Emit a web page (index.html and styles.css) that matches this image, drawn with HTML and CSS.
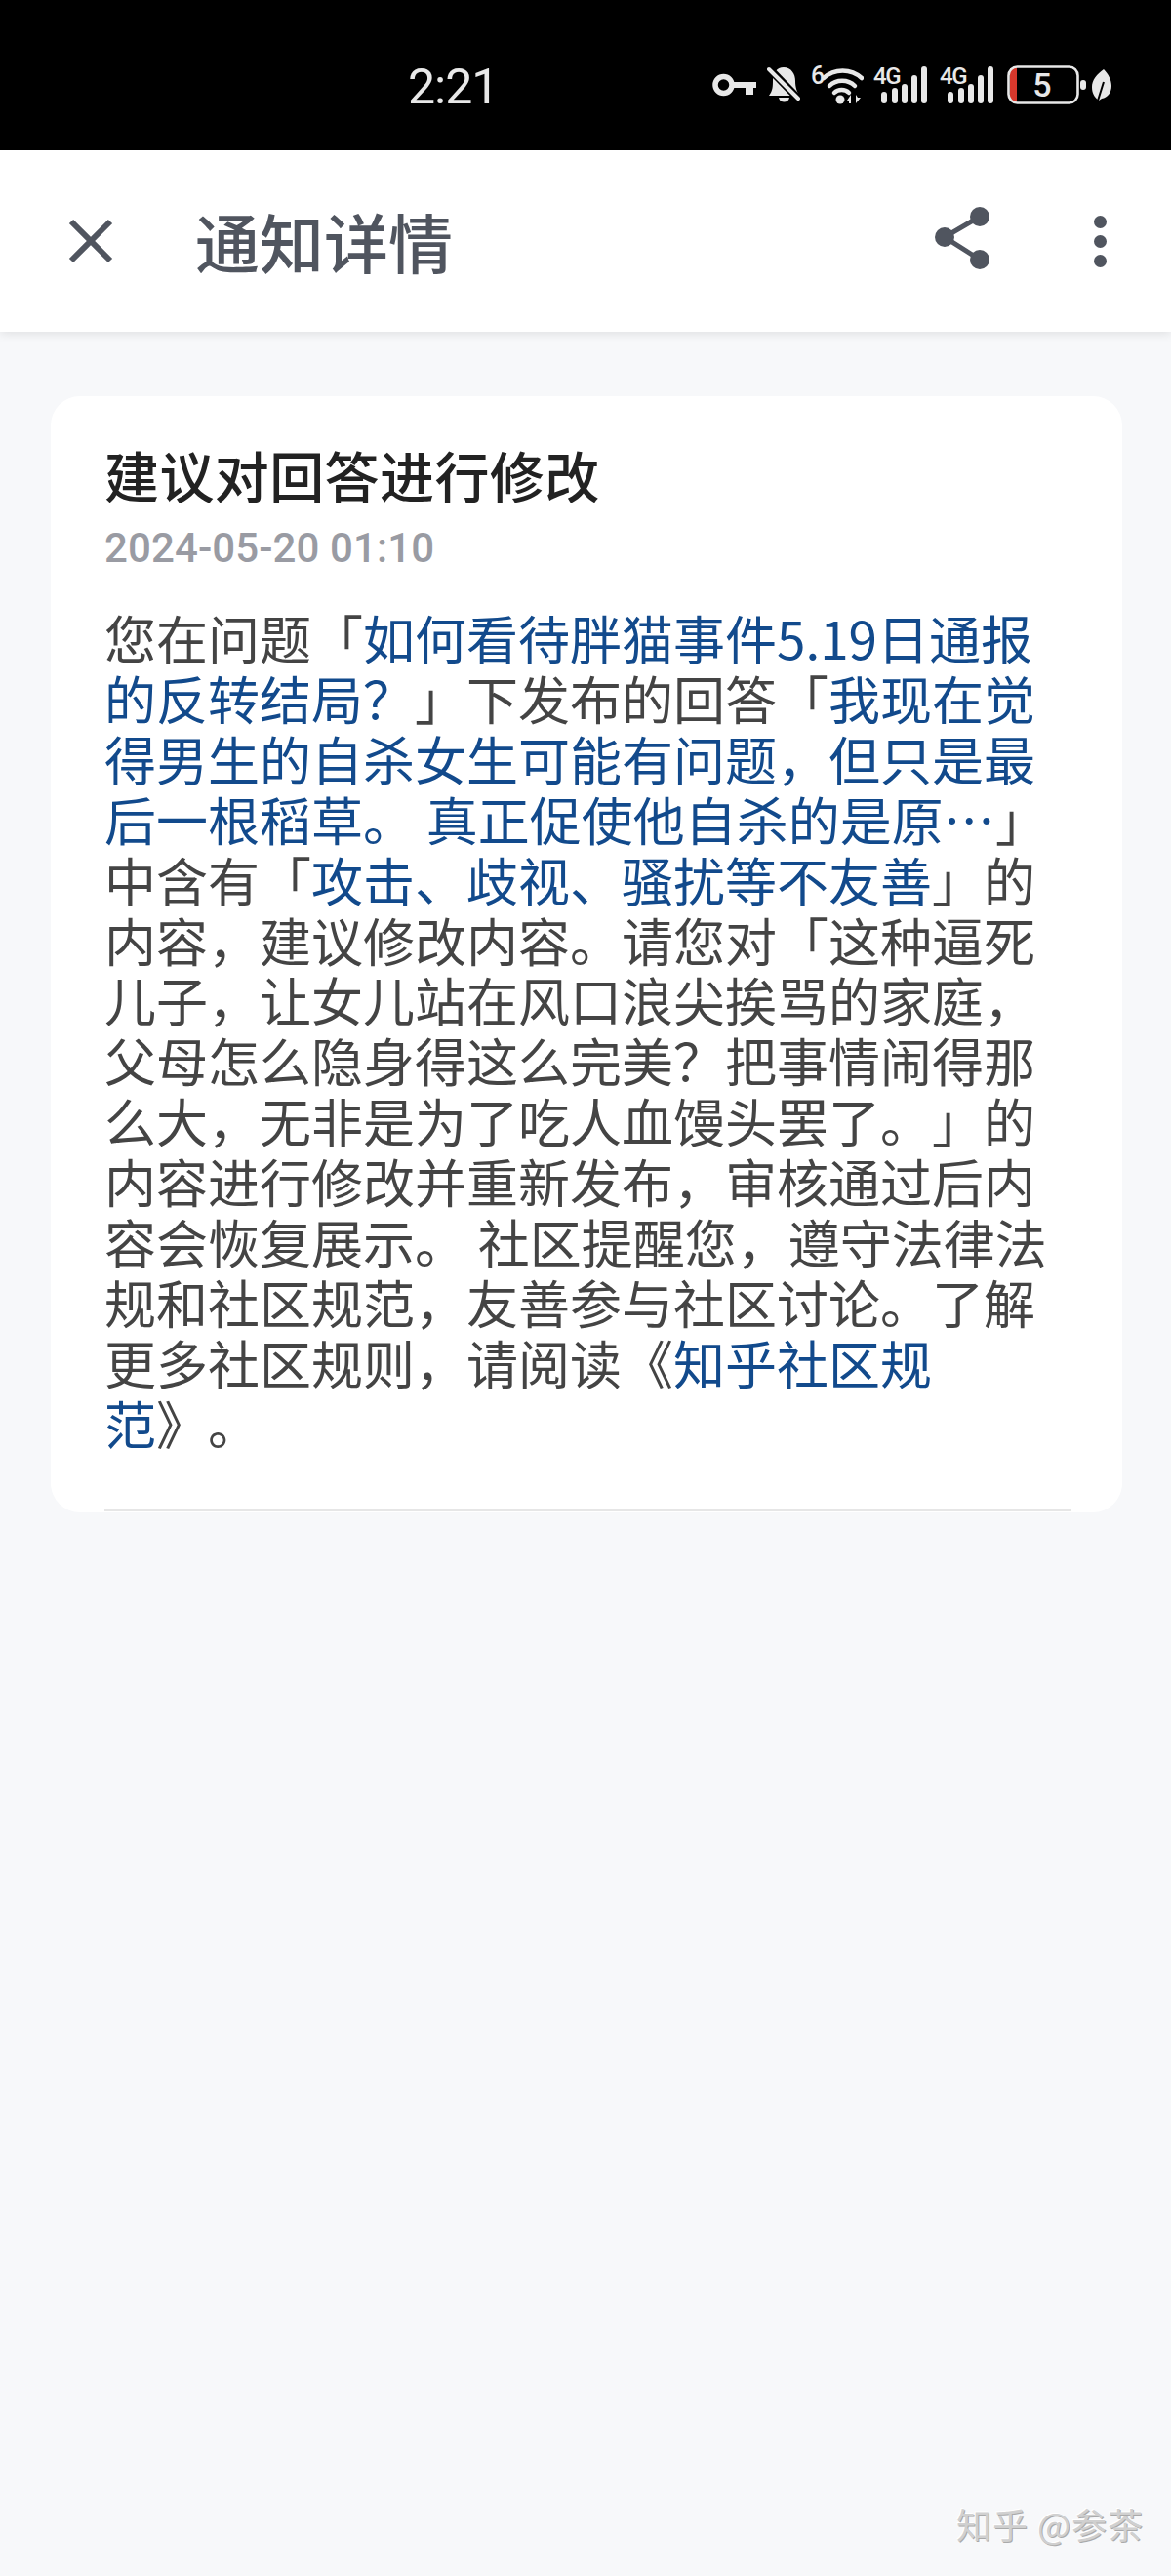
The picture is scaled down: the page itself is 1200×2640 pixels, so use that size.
FILE: index.html
```html
<!DOCTYPE html>
<html lang="zh-CN">
<head>
    <meta charset="UTF-8">
    <meta name="viewport" content="width=device-width, initial-scale=1.0">
    <title>通知详情</title>
    <link rel="stylesheet" href="styles.css">
</head>
<body>
    <div class="status-bar">
        <span class="status-time">2:21</span>
        <div class="status-icons">
            <svg class="icon-key" width="45" height="24" viewBox="0 0 45 24">
                <circle cx="11.5" cy="12" r="8.5" fill="none" stroke="#e8e8e8" stroke-width="5.5"/>
                <path d="M19 9h26v6h-3v7h-8v-7h-15z" fill="#e8e8e8"/>
            </svg>
            <svg class="icon-bell" width="35" height="38" viewBox="0 0 35 38">
                <path d="M17 1C25 1 29 8 29 15C29 22 31 26 33 30H2C6 25 6 20 6 14C6 7 10 1 17 1z" fill="#e8e8e8"/>
                <path d="M12 32h11c-1 6-10 6-11 0z" fill="#e8e8e8"/>
                <path d="M0 0l34 35" stroke="#000" stroke-width="8"/>
                <path d="M2 3l30 30" stroke="#e8e8e8" stroke-width="4" stroke-linecap="round"/>
            </svg>
            <svg class="icon-wifi" width="54" height="48" viewBox="0 -4 54 48">
                <text x="0" y="19" class="svg-label svg-label-six">6</text>
                <path d="M13 13C24 3 41 3 52 13" fill="none" stroke="#e8e8e8" stroke-width="4.5" stroke-linecap="round"/>
                <path d="M19 21C26 14 38 14 45 21" fill="none" stroke="#e8e8e8" stroke-width="4.5" stroke-linecap="round"/>
                <path d="M24 28C28 24 35 24 39 28" fill="none" stroke="#e8e8e8" stroke-width="4.5" stroke-linecap="round"/>
                <circle cx="30" cy="35" r="4.5" fill="#e8e8e8"/>
                <path d="M37 36l4-6v9h-2v-3zM46 30v9l5-6h-3z" fill="#e8e8e8"/>
            </svg>
            <svg class="icon-signal" width="56" height="48" viewBox="0 -4 56 48">
                <text x="0" y="19" class="svg-label">4G</text>
                <rect x="8" y="27" width="6" height="12" rx="3" fill="#e8e8e8"/>
                <rect x="19" y="23" width="6" height="16" rx="3" fill="#e8e8e8"/>
                <rect x="29" y="19" width="6" height="20" rx="3" fill="#e8e8e8"/>
                <rect x="39" y="10" width="6" height="29" rx="3" fill="#e8e8e8"/>
                <rect x="49" y="1" width="6" height="38" rx="3" fill="#e8e8e8"/>
            </svg>
            <svg class="icon-signal" width="56" height="48" viewBox="0 -4 56 48">
                <text x="0" y="19" class="svg-label">4G</text>
                <rect x="8" y="27" width="6" height="12" rx="3" fill="#e8e8e8"/>
                <rect x="19" y="23" width="6" height="16" rx="3" fill="#e8e8e8"/>
                <rect x="29" y="19" width="6" height="20" rx="3" fill="#e8e8e8"/>
                <rect x="39" y="10" width="6" height="29" rx="3" fill="#e8e8e8"/>
                <rect x="49" y="1" width="6" height="38" rx="3" fill="#e8e8e8"/>
            </svg>
            <svg class="icon-battery" width="81" height="40" viewBox="0 0 81 40">
                <rect x="3" y="3" width="7" height="34" fill="#d8382c"/>
                <rect x="1.5" y="1.5" width="71" height="37" rx="9" fill="none" stroke="#e8e8e8" stroke-width="2.6"/>
                <text x="36" y="32" class="svg-battery-num">5</text>
                <rect x="75" y="15" width="6" height="10" rx="3" fill="#e8e8e8"/>
            </svg>
            <svg class="icon-leaf" width="20" height="32" viewBox="0 0 20 32">
                <path d="M12 0c5 5 8 11 8 17 0 7-4 12-10 13l-3 2C2 28 0 24 0 18 0 11 5 5 12 0z" fill="#e8e8e8"/>
                <path d="M6 32L12 13" stroke="#000" stroke-width="2"/>
            </svg>
        </div>
    </div>

    <header class="app-bar">
        <svg class="icon-close" width="50" height="50" viewBox="0 0 50 50">
            <path d="M5 5l40 40M45 5L5 45" stroke="#50555f" stroke-width="6"/>
        </svg>
        <h1 class="app-title">通知详情</h1>
        <svg class="icon-share" width="56" height="64" viewBox="0 0 56 64">
            <path d="M46 10L10 31l36 23" fill="none" stroke="#50555f" stroke-width="5"/>
            <circle cx="46" cy="10" r="10" fill="#50555f"/>
            <circle cx="10" cy="31" r="10" fill="#50555f"/>
            <circle cx="46" cy="54" r="10" fill="#50555f"/>
        </svg>
        <div class="more-dots">
            <span class="dot"></span>
            <span class="dot"></span>
            <span class="dot"></span>
        </div>
    </header>

    <main class="content">
        <section class="card">
            <h2 class="card-title">建议对回答进行修改</h2>
            <div class="card-date">2024-05-20 01:10</div>
            <p class="card-text">您在问题「<a class="link">如何看待胖猫事件5.19日通报<br>的反转结局？</a>」下发布的回答「<a class="link">我现在觉<br>得男生的自杀女生可能有问题，但只是最<br>后一根稻草。 真正促使他自杀的是原…</a>」<br>中含有「<a class="link">攻击、歧视、骚扰等不友善</a>」的<br>内容，建议修改内容。请您对「这种逼死<br>儿子，让女儿站在风口浪尖挨骂的家庭，<br>父母怎么隐身得这么完美？把事情闹得那<br>么大，无非是为了吃人血馒头罢了。」的<br>内容进行修改并重新发布，审核通过后内<br>容会恢复展示。 社区提醒您，遵守法律法<br>规和社区规范，友善参与社区讨论。了解<br>更多社区规则，请阅读《<a class="link">知乎社区规<br>范</a>》。</p>
            <div class="card-divider"></div>
        </section>
    </main>

    <div class="watermark">知乎 @参茶</div>
</body>
</html>
```

FILE: styles.css
```css
body {
    font-family: "Noto Sans CJK SC", Roboto, sans-serif;
    background-color: #f7f8fa;
    margin: 0;
    width: 1200px;
    height: 2640px;
    position: relative;
    overflow: hidden;
    text-spacing-trim: space-all;
}
.status-bar {
    height: 154px;
    background: #000;
    display: flex;
    align-items: center;
    justify-content: space-between;
    padding: 20px 61px 0 418px;
    box-sizing: border-box;
}
.status-time {
    font-family: Roboto, sans-serif;
    font-size: 50px;
    color: #e8e8e8;
    letter-spacing: -1px;
    margin-top: 4px;
}
.status-icons {
    display: flex;
    align-items: center;
    gap: 10px;
}
.svg-label {
    font-family: Roboto, sans-serif;
    font-size: 24px;
    font-weight: 500;
    fill: #e8e8e8;
    letter-spacing: -1.5px;
}
.svg-label-six {
    font-size: 25px;
}
.svg-battery-num {
    font-family: Roboto, sans-serif;
    font-size: 34px;
    font-weight: 500;
    fill: #e8e8e8;
    text-anchor: middle;
}
.icon-key {
    margin-right: 1px;
}
.icon-signal + .icon-signal {
    margin-left: 2px;
}
.icon-battery {
    margin-left: 3px;
}
.icon-leaf {
    margin-left: -4px;
}
.app-bar {
    height: 186px;
    background: #fff;
    display: flex;
    align-items: center;
    padding: 0 66px 0 68px;
    box-sizing: border-box;
    box-shadow: 0 2px 10px rgba(0, 0, 0, 0.1);
    position: relative;
}
.icon-close {
    margin-right: 82px;
    flex: none;
}
.app-title {
    margin: 0 0 3px;
    flex: 1;
    font-size: 66px;
    font-weight: 500;
    color: #50555f;
}
.icon-share {
    margin: 0 107px 6px 0;
    flex: none;
}
.more-dots {
    display: flex;
    flex-direction: column;
    gap: 7px;
}
.dot {
    width: 13px;
    height: 13px;
    border-radius: 50%;
    background: #50555f;
}
.content {
    padding: 66px 50px 0 52px;
}
.card {
    background: #fff;
    border-radius: 30px;
    padding: 42px 52px 0 55px;
    height: 1144px;
    box-sizing: border-box;
    display: flex;
    flex-direction: column;
}
.card-title {
    margin: 0;
    font-size: 56px;
    font-weight: 500;
    line-height: 76px;
    letter-spacing: 0.4px;
    color: #222;
}
.card-date {
    margin-top: 12px;
    font-family: Roboto, sans-serif;
    font-size: 42px;
    font-weight: 500;
    line-height: 52px;
    letter-spacing: 0.1px;
    color: #999ba3;
}
.card-text {
    margin: 35px 0 0;
    font-size: 53px;
    line-height: 61.9px;
    color: #444;
    white-space: nowrap;
}
.link {
    color: #124a8c;
}
.card-divider {
    margin-top: auto;
    margin-bottom: 1px;
    height: 2px;
    background: #e6e6e6;
}
.watermark {
    position: absolute;
    right: 28px;
    bottom: 28px;
    font-size: 36px;
    letter-spacing: 1px;
    color: #d0d0d0;
    text-shadow: 1px 1px 0 #aaa, -1px -1px 0 #fff;
}
```
